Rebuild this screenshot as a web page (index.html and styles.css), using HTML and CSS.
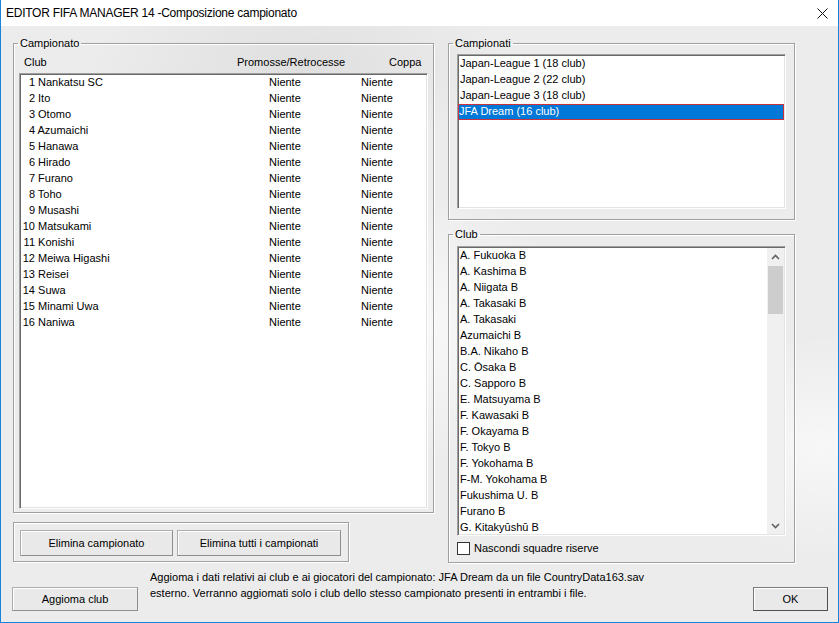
FILE: index.html
```html
<!DOCTYPE html>
<html lang="it">
<head>
<meta charset="utf-8">
<title>EDITOR FIFA MANAGER 14 -Composizione campionato</title>
<link rel="stylesheet" href="styles.css">
</head>
<body>
<div class="window">
  <div class="titlebar">
    <span class="title">EDITOR FIFA MANAGER 14 -Composizione campionato</span>
    <svg class="close" width="11" height="11" viewBox="0 0 11 11"><path d="M0.5 0.5 L10.5 10.5 M10.5 0.5 L0.5 10.5" stroke="#111" stroke-width="1" fill="none"/></svg>
  </div>
  <div class="client">
    <div class="main">
      <div class="col-left">
        <fieldset class="group group-camp">
          <legend>Campionato</legend>
          <div class="list-header"><span>Club</span><span>Promosse/Retrocesse</span><span>Coppa</span></div>
          <div class="listbox standings">
            <div class="row"><span class="name"><span class="num">1</span> Nankatsu SC</span><span>Niente</span><span>Niente</span></div>
            <div class="row"><span class="name"><span class="num">2</span> Ito</span><span>Niente</span><span>Niente</span></div>
            <div class="row"><span class="name"><span class="num">3</span> Otomo</span><span>Niente</span><span>Niente</span></div>
            <div class="row"><span class="name"><span class="num">4</span> Azumaichi</span><span>Niente</span><span>Niente</span></div>
            <div class="row"><span class="name"><span class="num">5</span> Hanawa</span><span>Niente</span><span>Niente</span></div>
            <div class="row"><span class="name"><span class="num">6</span> Hirado</span><span>Niente</span><span>Niente</span></div>
            <div class="row"><span class="name"><span class="num">7</span> Furano</span><span>Niente</span><span>Niente</span></div>
            <div class="row"><span class="name"><span class="num">8</span> Toho</span><span>Niente</span><span>Niente</span></div>
            <div class="row"><span class="name"><span class="num">9</span> Musashi</span><span>Niente</span><span>Niente</span></div>
            <div class="row"><span class="name"><span class="num">10</span> Matsukami</span><span>Niente</span><span>Niente</span></div>
            <div class="row"><span class="name"><span class="num">11</span> Konishi</span><span>Niente</span><span>Niente</span></div>
            <div class="row"><span class="name"><span class="num">12</span> Meiwa Higashi</span><span>Niente</span><span>Niente</span></div>
            <div class="row"><span class="name"><span class="num">13</span> Reisei</span><span>Niente</span><span>Niente</span></div>
            <div class="row"><span class="name"><span class="num">14</span> Suwa</span><span>Niente</span><span>Niente</span></div>
            <div class="row"><span class="name"><span class="num">15</span> Minami Uwa</span><span>Niente</span><span>Niente</span></div>
            <div class="row"><span class="name"><span class="num">16</span> Naniwa</span><span>Niente</span><span>Niente</span></div>
          </div>
        </fieldset>
        <fieldset class="group group-buttons">
          <button class="btn btn-del">Elimina campionato</button>
          <button class="btn btn-delall">Elimina tutti i campionati</button>
        </fieldset>
      </div>
      <div class="col-right">
        <fieldset class="group group-leagues">
          <legend>Campionati</legend>
          <div class="listbox leagues">
            <div class="item">Japan-League 1 (18 club)</div>
            <div class="item">Japan-League 2 (22 club)</div>
            <div class="item">Japan-League 3 (18 club)</div>
            <div class="item selected">JFA Dream (16 club)</div>
          </div>
        </fieldset>
        <fieldset class="group group-clubs">
          <legend>Club</legend>
          <div class="listbox clubs">
            <div class="items">
              <div class="item">A. Fukuoka B</div>
              <div class="item">A. Kashima B</div>
              <div class="item">A. Niigata B</div>
              <div class="item">A. Takasaki B</div>
              <div class="item">A. Takasaki</div>
              <div class="item">Azumaichi B</div>
              <div class="item">B.A. Nikaho B</div>
              <div class="item">C. Ōsaka B</div>
              <div class="item">C. Sapporo B</div>
              <div class="item">E. Matsuyama B</div>
              <div class="item">F. Kawasaki B</div>
              <div class="item">F. Okayama B</div>
              <div class="item">F. Tokyo B</div>
              <div class="item">F. Yokohama B</div>
              <div class="item">F-M. Yokohama B</div>
              <div class="item">Fukushima U. B</div>
              <div class="item">Furano B</div>
              <div class="item">G. Kitakyūshū B</div>
            </div>
            <div class="scrollbar">
              <div class="sb-btn"><svg width="9" height="6" viewBox="0 0 9 6"><path d="M1 5 L4.5 1.5 L8 5" stroke="#606060" stroke-width="1.6" fill="none"/></svg></div>
              <div class="sb-track"><div class="sb-thumb"></div></div>
              <div class="sb-btn"><svg width="9" height="6" viewBox="0 0 9 6"><path d="M1 1 L4.5 4.5 L8 1" stroke="#606060" stroke-width="1.6" fill="none"/></svg></div>
            </div>
          </div>
          <label class="check"><span class="box"></span>Nascondi squadre riserve</label>
        </fieldset>
      </div>
    </div>
    <div class="bottom">
      <button class="btn btn-update">Aggioma club</button>
      <p class="info">Aggioma i dati relativi ai club e ai giocatori del campionato: JFA Dream da un file CountryData163.sav<br>esterno. Verranno aggiomati solo i club dello stesso campionato presenti in entrambi i file.</p>
      <button class="btn btn-ok">OK</button>
    </div>
  </div>
</div>
</body>
</html>
```
FILE: styles.css
```css
* { box-sizing: border-box; }
html, body { margin: 0; padding: 0; }
body {
  width: 839px;
  height: 623px;
  overflow: hidden;
  font-family: "Liberation Sans", Arial, sans-serif;
  font-size: 11px;
  color: #000;
}
.window {
  width: 839px;
  height: 623px;
  border: 1px solid #1883d7;
  border-top: none;
  display: flex;
  flex-direction: column;
  background: #fff;
}
.titlebar {
  height: 26px;
  flex: none;
  display: flex;
  align-items: center;
  justify-content: space-between;
  padding: 0 10px 0 5px;
  background: #fff;
}
.title {
  font-size: 12px;
  letter-spacing: -0.25px;
  color: #000;
}
.close { display: block; }
.client {
  flex: 1;
  display: flex;
  flex-direction: column;
  background:
    radial-gradient(ellipse 260px 200px at 400px 300px, rgba(255,255,255,0.7), rgba(255,255,255,0) 70%),
    radial-gradient(ellipse 200px 160px at 820px 420px, rgba(255,255,255,0.6), rgba(255,255,255,0) 70%),
    radial-gradient(ellipse 300px 120px at 300px 40px, rgba(210,210,210,0.5), rgba(210,210,210,0) 70%),
    #ececec;
}
.main {
  display: grid;
  grid-template-columns: 421px 347px;
  column-gap: 14px;
  padding: 11px 0 0 12px;
}
.col-left, .col-right {
  display: flex;
  flex-direction: column;
}
.group {
  margin: 0;
  min-width: 0;
  border: 1px solid #a0a0a0;
  box-shadow: inset 1px 1px 0 #fff, 1px 1px 0 #fff;
}
.group legend {
  padding: 0 2px;
  margin-left: -1px;
  line-height: 13px;
  font-size: 11px;
}
.col-right .group legend {
  margin-left: -4px;
}
.group-camp {
  padding: 6px 5px 3px 5px;
}
.list-header {
  display: grid;
  grid-template-columns: 213px 152px 1fr;
  padding-left: 5px;
  line-height: 13px;
  margin-bottom: 4px;
}
.listbox {
  background: #fff;
  border: 1px solid;
  border-color: #a0a0a0 #fff #fff #a0a0a0;
  box-shadow: inset 1px 1px 0 #696969, inset -1px -1px 0 #e3e3e3;
  padding: 1px;
  overflow: hidden;
}
.standings {
  height: 436px;
}
.row {
  display: grid;
  grid-template-columns: 248px 92px 1fr;
  height: 16px;
  line-height: 15px;
  white-space: nowrap;
}
.name { padding-left: 1px; }
.num {
  display: inline-block;
  width: 13px;
  text-align: right;
}
.group-buttons {
  margin-top: 9px;
  padding: 7px 6px 5px 6px;
  width: 336px;
  display: flex;
  gap: 4px;
}
.btn {
  font-family: "Liberation Sans", Arial, sans-serif;
  font-size: 11px;
  color: #000;
  background: #e9e9e9;
  border: 1px solid #adadad;
  border-right-color: #8e8e8e;
  border-bottom-color: #8e8e8e;
  box-shadow: inset 1px 1px 0 #fff;
  padding: 0;
  margin: 0;
}
.btn-del { width: 153px; height: 26px; }
.btn-delall { width: 164px; height: 26px; }
.group-leagues {
  padding: 4px 8px 10px 8px;
}
.leagues { height: 155px; }
.item {
  height: 16px;
  line-height: 15px;
  padding-left: 1px;
  white-space: nowrap;
}
.leagues .item.selected {
  background: #0078d7;
  color: #fff;
  border: 1px solid #c8323c;
  line-height: 13px;
  padding-left: 0;
  margin-left: -1px;
}
.group-clubs {
  margin-top: 8px;
  padding: 5px 8px 6px 8px;
}
.clubs {
  height: 290px;
  display: flex;
}
.items {
  flex: 1;
  overflow: hidden;
}
.scrollbar {
  width: 17px;
  flex: none;
  background: #f0f0f0;
  display: flex;
  flex-direction: column;
}
.sb-btn {
  height: 17px;
  display: flex;
  align-items: center;
  justify-content: center;
  flex: none;
}
.sb-track {
  flex: 1;
  padding: 1px 1px 0 1px;
}
.sb-thumb {
  height: 48px;
  background: #cdcdcd;
}
.check {
  display: flex;
  align-items: center;
  height: 15px;
  margin-top: 5px;
  padding-left: 0;
  line-height: 15px;
}
.box {
  width: 13px;
  height: 13px;
  border: 1px solid #333;
  background: #fff;
  margin-right: 4px;
  flex: none;
}
.bottom {
  flex: 1;
  display: flex;
  align-items: flex-start;
  padding: 0 10px 0 11px;
}
.btn-update {
  width: 126px;
  height: 24px;
  margin-top: 24px;
  flex: none;
}
.info {
  margin: 6px 0 0 12px;
  line-height: 16px;
  white-space: nowrap;
}
.btn-ok {
  width: 75px;
  height: 24px;
  margin-top: 24px;
  margin-left: auto;
  flex: none;
  border-color: #7a7a7a;
  border-right-color: #505050;
  border-bottom-color: #505050;
}
```
